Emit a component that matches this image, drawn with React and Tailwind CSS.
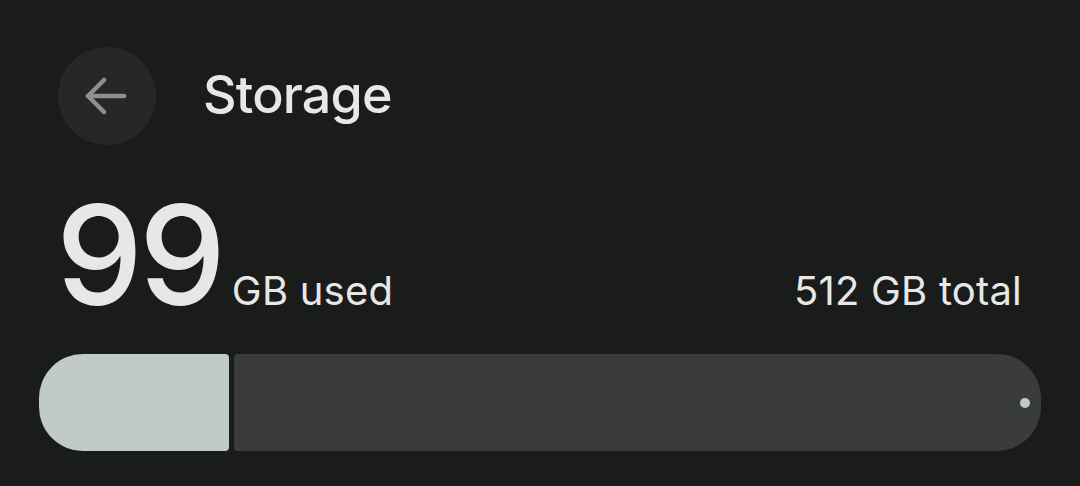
function BackArrow() {
  return (
    <svg width="42" height="38" viewBox="0 0 42 38" fill="none" stroke="#8e8f8f" strokeWidth="4.5" strokeLinecap="round" strokeLinejoin="round">
      <path d="M3 19H39" />
      <path d="M19 3L3 19L19 35" />
    </svg>
  );
}

function App() {
  const font = { fontFamily: 'Inter, "Open Sans", sans-serif' };
  return (
    <div className="w-[1080px] h-[486px] bg-[#1a1b1b] overflow-hidden text-[#e6e7e6]" style={font}>
      {/* Header */}
      <div className="flex items-center pl-[58px] pt-[47px]">
        <button className="w-[98px] h-[98px] rounded-full bg-[#262727] flex items-center justify-center pr-[3px]">
          <BackArrow />
        </button>
        <h1 className="ml-[47px] text-[52px] font-medium tracking-[-0.8px] leading-none pb-[2px]">Storage</h1>
      </div>

      {/* Usage */}
      <div className="flex items-baseline justify-between pl-[56px] pr-[58px] mt-[49px] h-[117px]">
        <div className="flex items-baseline">
          <span className="text-[138px] leading-[122px] font-[450] tracking-[-4px]">99</span>
          <span className="ml-[10px] text-[40px] leading-none tracking-[0.2px]">GB used</span>
        </div>
        <span className="text-[40px] leading-none tracking-[0.2px]">512 GB total</span>
      </div>

      {/* Bar */}
      <div className="flex mx-[39px] mt-[43px] h-[97px] gap-[5px]">
        <div className="w-[190px] bg-[#c0cbc6] rounded-l-[44px] rounded-r-[4px]"></div>
        <div className="flex-1 bg-[#3a3c3a] rounded-r-[44px] rounded-l-[4px] flex items-center justify-end pr-[11px]">
          <div className="w-[10px] h-[10px] rounded-full bg-[#c0cbc6]"></div>
        </div>
      </div>
    </div>
  );
}

export default App;
